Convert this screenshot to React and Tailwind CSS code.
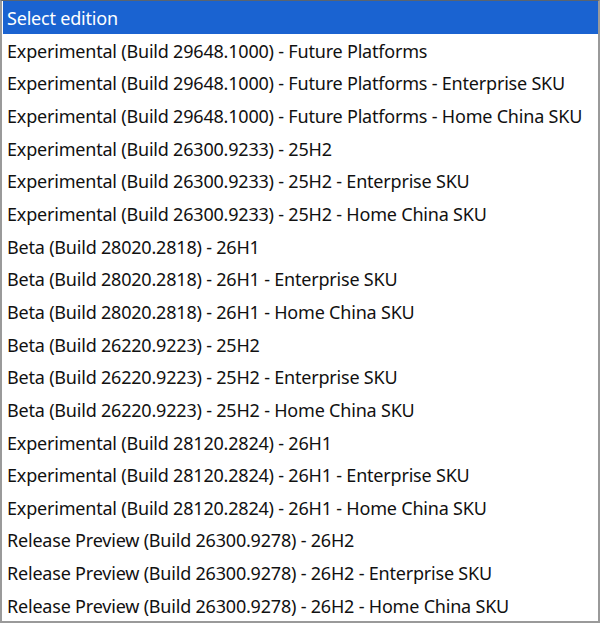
import React from 'react';

const editions = [
  'Experimental (Build 29648.1000) - Future Platforms',
  'Experimental (Build 29648.1000) - Future Platforms - Enterprise SKU',
  'Experimental (Build 29648.1000) - Future Platforms - Home China SKU',
  'Experimental (Build 26300.9233) - 25H2',
  'Experimental (Build 26300.9233) - 25H2 - Enterprise SKU',
  'Experimental (Build 26300.9233) - 25H2 - Home China SKU',
  'Beta (Build 28020.2818) - 26H1',
  'Beta (Build 28020.2818) - 26H1 - Enterprise SKU',
  'Beta (Build 28020.2818) - 26H1 - Home China SKU',
  'Beta (Build 26220.9223) - 25H2',
  'Beta (Build 26220.9223) - 25H2 - Enterprise SKU',
  'Beta (Build 26220.9223) - 25H2 - Home China SKU',
  'Experimental (Build 28120.2824) - 26H1',
  'Experimental (Build 28120.2824) - 26H1 - Enterprise SKU',
  'Experimental (Build 28120.2824) - 26H1 - Home China SKU',
  'Release Preview (Build 26300.9278) - 26H2',
  'Release Preview (Build 26300.9278) - 26H2 - Enterprise SKU',
  'Release Preview (Build 26300.9278) - 26H2 - Home China SKU',
];

export default function App() {
  return (
    <div
      className="w-[600px] h-[623px] bg-white border-t border-t-[#5a6470] border-l-2 border-r-2 border-b-2 border-[#9a9a9a] text-[#111] overflow-hidden tracking-[-0.2px]"
      style={{ fontFamily: '"Noto Sans", "Open Sans", sans-serif' }}
    >
      <div className="pl-px">
        <div className="h-[33px] bg-[#1a63d1] text-white text-[18px] flex items-center pl-[4px] pt-px">
          Select edition
        </div>
        <ul>
          {editions.map((e, i) => (
            <li key={i} className="h-[32.65px] flex items-center pl-[4px] pt-[2px] text-[18px] whitespace-nowrap">
              {e}
            </li>
          ))}
        </ul>
      </div>
    </div>
  );
}
